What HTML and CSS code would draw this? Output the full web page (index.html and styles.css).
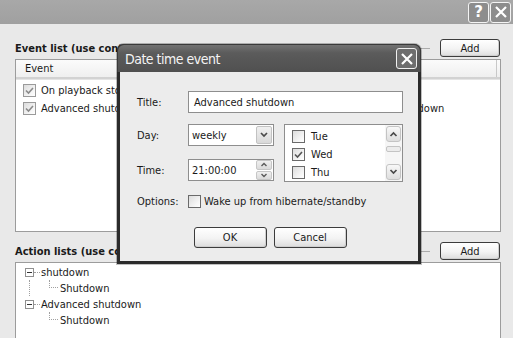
FILE: index.html
```html
<!DOCTYPE html>
<html>
<head>
<meta charset="utf-8">
<link rel="stylesheet" href="styles.css">
</head>
<body>
<div class="titlebar">
  <div class="cap-btn">?</div>
  <div class="cap-btn"><svg width="14" height="14" viewBox="0 0 14 14"><path d="M2 2 L12 12 M12 2 L2 12" stroke="#fff" stroke-width="2.2" fill="none"/></svg></div>
</div>
<div class="content">
  <div class="head">
    <span class="label">Event list (use context menu to edit events)</span>
    <span class="rule"></span>
    <button class="btn add">Add</button>
  </div>
  <div class="listview">
    <div class="lv-head">
      <div class="hcol c1">Event</div>
      <div class="hcol c2">Action list</div>
      <div class="hcol c3"></div>
    </div>
    <div class="lv-row">
      <div class="c1"><span class="cb soft"><svg width="11" height="11" viewBox="0 0 11 11"><polyline points="2,5.5 4.5,8 9,3" fill="none" stroke="#8a8a8a" stroke-width="1.6"/></svg></span>On playback stop</div>
      <div class="c2">shutdown</div>
    </div>
    <div class="lv-row">
      <div class="c1"><span class="cb soft"><svg width="11" height="11" viewBox="0 0 11 11"><polyline points="2,5.5 4.5,8 9,3" fill="none" stroke="#8a8a8a" stroke-width="1.6"/></svg></span>Advanced shutdown</div>
      <div class="c2">Advanced shutdown</div>
    </div>
  </div>
  <div class="head second">
    <span class="label">Action lists (use context menu to edit actions)</span>
    <span class="rule"></span>
    <button class="btn add">Add</button>
  </div>
  <div class="tree">
    <div class="t-row">
      <span class="exp"><span class="minus"></span></span><span class="hdot"></span><span class="t-text">shutdown</span>
    </div>
    <div class="t-row">
      <span class="vline"></span><span class="elbow"></span><span class="t-text">Shutdown</span>
    </div>
    <div class="t-row">
      <span class="exp"><span class="minus"></span></span><span class="hdot"></span><span class="t-text">Advanced shutdown</span>
    </div>
    <div class="t-row">
      <span class="vline none"></span><span class="elbow"></span><span class="t-text">Shutdown</span>
    </div>
  </div>
</div>

<div class="dialog">
  <div class="dlg-title">
    <span class="dlg-caption">Date time event</span>
    <div class="dlg-close"><svg width="14" height="14" viewBox="0 0 14 14"><path d="M2 2 L12 12 M12 2 L2 12" stroke="#fff" stroke-width="2.2" fill="none"/></svg></div>
  </div>
  <div class="dlg-body">
    <div class="f-row">
      <span class="f-label">Title:</span>
      <div class="input wide">Advanced shutdown</div>
    </div>
    <div class="f-grid">
      <div class="f-left">
        <div class="f-row tight">
          <span class="f-label">Day:</span>
          <div class="input combo">weekly<span class="drop"><svg width="10" height="8" viewBox="0 0 10 8"><polyline points="2,2 5,5 8,2" fill="none" stroke="#4a4a4a" stroke-width="1.7"/></svg></span></div>
        </div>
        <div class="f-row tight">
          <span class="f-label">Time:</span>
          <div class="input combo">21:00:00<span class="spin"><span class="sb"><svg width="8" height="5" viewBox="0 0 8 5"><polyline points="1.5,4 4,1.5 6.5,4" fill="none" stroke="#5a5a5a" stroke-width="1.4"/></svg></span><span class="sb"><svg width="8" height="5" viewBox="0 0 8 5"><polyline points="1.5,1 4,3.5 6.5,1" fill="none" stroke="#5a5a5a" stroke-width="1.4"/></svg></span></span></div>
        </div>
      </div>
      <div class="listbox">
        <div class="lb-items">
          <div class="lb-row"><span class="cb"></span>Tue</div>
          <div class="lb-row"><span class="cb"><svg width="11" height="11" viewBox="0 0 11 11"><polyline points="2,5.5 4.5,8 9,3" fill="none" stroke="#555" stroke-width="1.6"/></svg></span>Wed</div>
          <div class="lb-row"><span class="cb"></span>Thu</div>
        </div>
        <div class="scroll">
          <span class="sbtn"><svg width="9" height="6" viewBox="0 0 9 6"><polyline points="1.5,5 4.5,2 7.5,5" fill="none" stroke="#4a4a4a" stroke-width="1.7"/></svg></span>
          <span class="thumb"></span>
          <span class="track"></span>
          <span class="sbtn"><svg width="9" height="6" viewBox="0 0 9 6"><polyline points="1.5,1 4.5,4 7.5,1" fill="none" stroke="#4a4a4a" stroke-width="1.7"/></svg></span>
        </div>
      </div>
    </div>
    <div class="f-row opts">
      <span class="f-label">Options:</span>
      <span class="cb"></span><span class="opt-text">Wake up from hibernate/standby</span>
    </div>
    <div class="buttons">
      <button class="btn dbtn">OK</button>
      <button class="btn dbtn">Cancel</button>
    </div>
  </div>
</div>
</body>
</html>
```
FILE: styles.css
```css
* { box-sizing: border-box; }
html, body { margin: 0; padding: 0; }
body {
  width: 513px;
  height: 338px;
  overflow: hidden;
  position: relative;
  background: #e9e9e9;
  font-family: "DejaVu Sans Condensed", "DejaVu Sans", sans-serif;
  font-stretch: condensed;
  font-size: 11px;
  color: #1a1a1a;
}

/* main caption */
.titlebar {
  height: 24px;
  background: linear-gradient(#a8a8a8, #a0a0a0);
  display: flex;
  justify-content: flex-end;
  align-items: center;
  gap: 1px;
  padding-right: 2px;
}
.cap-btn {
  width: 21px;
  height: 21px;
  border: 1px solid #f4f4f4;
  border-radius: 3px;
  background: #8d8d8d;
  display: flex;
  align-items: center;
  justify-content: center;
  color: #fff;
  font: bold 15px "DejaVu Sans", sans-serif;
}

.content { padding: 15px 12px 0 15px; }

.head {
  display: flex;
  align-items: center;
  height: 18px;
  margin-bottom: 2px;
}
.head.second { margin-top: 10px; }
.head .label { font-weight: bold; white-space: nowrap; line-height: 11px; }
.head .rule {
  flex: 1;
  height: 0;
  border-top: 1px solid #ababab;
  margin: 0 10px 0 4px;
}

.btn {
  font-family: inherit;
  font-stretch: condensed;
  font-size: 11px;
  color: #1a1a1a;
  border: 1px solid #3c3c3c;
  border-radius: 3px;
  background: linear-gradient(#ffffff, #f3f3f3 55%, #dcdcdc);
  padding: 0;
  box-shadow: inset -1px -1px 0 #cfcfcf;
}
.add { width: 60px; height: 18px; margin-right: 1px; }

/* list view */
.listview {
  height: 173px;
  border: 1px solid #9c9c9c;
  background: #fff;
}
.lv-head {
  display: flex;
  height: 19px;
  background: linear-gradient(#fbfbfb, #efefef);
  border-bottom: 2px solid #d2d2d2;
  box-shadow: 0 1px 0 #e4e4e4;
}
.hcol { line-height: 17px; border-right: 1px solid #c8c8c8; }
.hcol.c1 { width: 322px; padding-left: 9px; }
.hcol.c2 { width: 159px; padding-left: 6px; }
.hcol.c3 { flex: 1; border-right: none; }
.lv-row {
  display: flex;
  align-items: center;
  height: 18px;
}
.lv-head + .lv-row { margin-top: 2px; }
.lv-row .c1 { width: 322px; padding-left: 7px; display: flex; align-items: center; white-space: nowrap; }
.lv-row .c2 { padding-left: 6px; white-space: nowrap; }

.cb {
  width: 13px;
  height: 13px;
  flex: none;
  border: 1px solid #6a6a6a;
  background: linear-gradient(135deg, #dcdcdc, #f6f6f6 70%, #ffffff);
  display: inline-flex;
  align-items: center;
  justify-content: center;
  margin-right: 5px;
}
.cb.soft { border-color: #9a9a9a; }

/* tree */
.tree {
  height: 100px;
  border: 1px solid #9c9c9c;
  background: #fff;
  padding-top: 1px;
}
.t-row {
  display: flex;
  align-items: center;
  height: 16px;
  white-space: nowrap;
}
.exp {
  width: 9px;
  height: 9px;
  margin-left: 9px;
  border: 1px solid #8f8f8f;
  background: #fff;
  display: flex;
  align-items: center;
  justify-content: center;
}
.minus { width: 5px; height: 1px; background: #333; }
.hdot { width: 6px; height: 0; border-top: 1px dotted #a0a0a0; margin: 0 1px 0 0; }
.vline {
  width: 20px;
  height: 16px;
  margin-left: 13px;
  border-left: 1px dotted #a0a0a0;
}
.vline.none { border-left-color: transparent; }
.elbow {
  width: 9px;
  height: 8px;
  align-self: flex-start;
  border-left: 1px dotted #a0a0a0;
  border-bottom: 1px dotted #a0a0a0;
  margin-right: 2px;
}

/* dialog */
.dialog {
  position: absolute;
  left: 117px;
  top: 44px;
  width: 304px;
  height: 220px;
  background: #2b2b2b;
  border-radius: 7px 7px 0 0;
  padding: 0 3px 3px;
  display: flex;
  flex-direction: column;
  box-shadow: 0 0 0 1px rgba(0,0,0,0.25);
}
.dlg-title {
  height: 28px;
  margin: 0 -3px;
  border-radius: 7px 7px 0 0;
  background: linear-gradient(#727272, #5b5b5b 30%, #505050);
  border: 1px solid #3a3a3a;
  border-bottom: none;
  display: flex;
  align-items: center;
  justify-content: space-between;
  padding: 0 3px 0 7px;
}
.dlg-caption {
  color: #f4f4f4;
  font-size: 14px;
  line-height: 16px;
  letter-spacing: -0.5px;
}
.dlg-close {
  width: 21px;
  height: 21px;
  border: 1px solid #f0f0f0;
  border-radius: 3px;
  background: #6e6e6e;
  display: flex;
  align-items: center;
  justify-content: center;
}
.dlg-body {
  flex: 1;
  background: #ececec;
  padding: 19px 15px 0 17px;
}
.f-row { display: flex; align-items: center; }
.f-label { width: 51px; flex: none; }
.input {
  height: 22px;
  border: 1px solid #8e8e8e;
  background: #fff;
  display: flex;
  align-items: center;
  padding-left: 4px;
  white-space: nowrap;
}
.input.wide { flex: 1; padding-left: 5px; }
.f-grid {
  display: flex;
  margin-top: 11px;
  height: 58px;
}
.f-left {
  display: flex;
  flex-direction: column;
  justify-content: space-between;
  padding-bottom: 1px;
}
.combo {
  width: 86px;
  justify-content: space-between;
  padding-right: 1px;
  padding-left: 3px;
}
.drop {
  width: 16px;
  height: 18px;
  border: 1px solid #c2c2c2;
  border-radius: 2px;
  background: linear-gradient(#f0f0f0, #d9d9d9);
  display: flex;
  align-items: center;
  justify-content: center;
}
.spin {
  width: 16px;
  height: 20px;
  display: flex;
  flex-direction: column;
  gap: 1px;
}
.sb {
  flex: 1;
  border: 1px solid #c6c6c6;
  border-radius: 2px;
  background: linear-gradient(#f0f0f0, #dadada);
  display: flex;
  align-items: center;
  justify-content: center;
}
.listbox {
  margin-left: 10px;
  width: 119px;
  height: 58px;
  border: 1px solid #8e8e8e;
  background: #fff;
  display: flex;
}
.lb-items { flex: 1; padding: 2px 0 0 7px; }
.lb-row { display: flex; align-items: center; height: 18px; }
.lb-row .cb { margin-right: 6px; }
.scroll {
  width: 17px;
  padding: 1px;
  display: flex;
  flex-direction: column;
  background: #f6f6f6;
}
.sbtn {
  height: 16px;
  border: 1px solid #c4c4c4;
  border-radius: 3px;
  background: linear-gradient(#f8f8f8, #dedede);
  display: flex;
  align-items: center;
  justify-content: center;
}
.thumb {
  height: 6px;
  margin-top: 4px;
  border: 1px solid #c4c4c4;
  border-radius: 2px;
  background: #ececec;
}
.track { flex: 1; }
.opts { margin-top: 13px; }
.opts .cb { margin-right: 3px; }
.buttons {
  display: flex;
  justify-content: center;
  gap: 7px;
  margin-top: 19px;
}
.dbtn { width: 73px; height: 21px; }
```
